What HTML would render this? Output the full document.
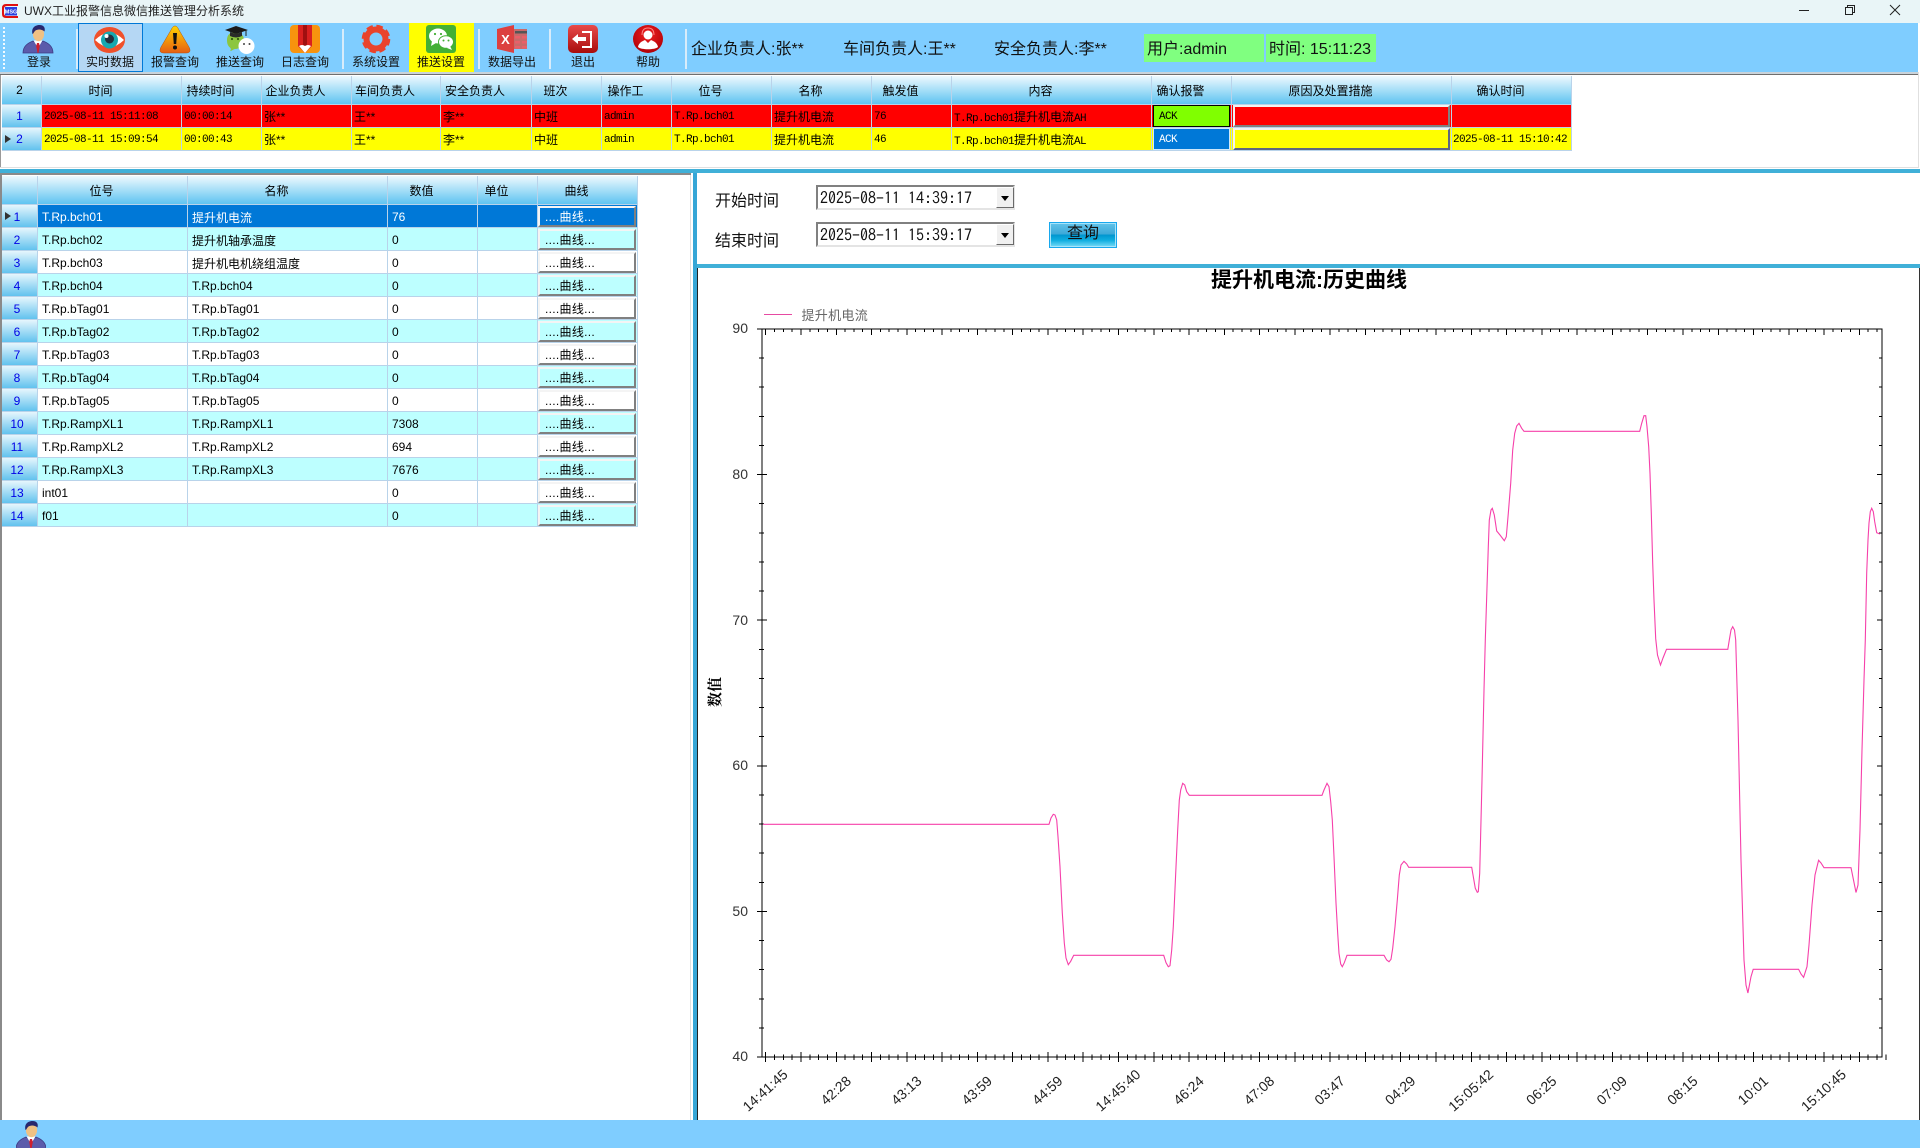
<!DOCTYPE html>
<html lang="zh-CN"><head><meta charset="utf-8"><title>UWX工业报警信息微信推送管理分析系统</title>
<style>
*{box-sizing:border-box}
html,body{margin:0;padding:0;width:1920px;height:1148px;overflow:hidden;background:#fff;font:12px "Liberation Sans","Noto Sans CJK SC",sans-serif;color:#000}
.a{position:absolute}
.tl{position:absolute;top:54px;width:70px;text-align:center;font-size:12px;line-height:16px;color:#111;white-space:nowrap}
.sep{position:absolute;top:29px;height:40px;width:2px;background:#d8ecfa}
.lb{position:absolute;top:39px;font-size:16px;line-height:22px;white-space:nowrap;color:#111}
table{position:absolute;border-collapse:separate;border-spacing:0;table-layout:fixed}
th{height:29px;padding:0 22px 0 0;font-weight:normal;font-size:12px;text-align:center;background:linear-gradient(#eef9fe,#5fc4f1);border-right:1px solid #b9d3ea;border-bottom:1px solid #b9d3ea;white-space:nowrap}
td{height:23px;padding:0;border-right:1px solid #b9d3ea;border-bottom:1px solid #b9d3ea;font-size:12px;white-space:nowrap;overflow:hidden;position:relative}
td.h{background:linear-gradient(#e6f6fd,#62c2ee);color:#0000e6;text-align:center}
#g1 td{padding-left:2px}
#g1 td.m{padding-top:2px}
#g1 td.h{padding:0 4px 0 0}
#g1 td.b{padding:0}
#g2 td{padding:2px 0 0 4px}
#g2 td.h{padding:1px 5px 0 0}
#g2 td.b{padding:0}
.m{font-family:"Liberation Mono","IPAGothic",monospace;font-size:11px;letter-spacing:-.6px}
.r{background:#f00}.y{background:#ff0}
.ar{position:absolute;left:3px;top:7px;width:0;height:0;border-left:6px solid #333;border-top:4.5px solid transparent;border-bottom:4.5px solid transparent}
.i3{height:22px;border:2px solid;border-color:#f2f2f2 #808080 #808080 #f2f2f2;margin:0 1px 0 1px}
.cy{background:#bdffff}
.sel{background:#0078d7;color:#fff}
.btn{height:21px;margin:0 1px 0 0;border:2px solid;border-color:#f4f4f4 #808080 #808080 #f4f4f4;padding-left:5px;line-height:18px;color:#000;letter-spacing:.3px}
.sel .btn,.btn.s{color:#fff;background:#0078d7}
.dp{position:absolute;left:816px;width:199px;height:25px;background:#fff;border:2px solid;border-color:#808080 #e4e4e4 #e4e4e4 #808080;font:16px/23px "IPAGothic","Liberation Mono",monospace;padding-left:2px;white-space:nowrap;color:#111}
.dd{position:absolute;right:-1px;top:0;width:18px;height:21px;background:#f0f0f0;border:1px solid;border-color:#fff #6a6a6a #6a6a6a #fff}
.dd:after{content:"";position:absolute;left:4px;top:8px;border-left:4px solid transparent;border-right:4px solid transparent;border-top:5px solid #000}
</style></head><body>

<!-- title bar -->
<div class="a" style="left:0;top:0;width:1920px;height:23px;background:#e9f5f7"></div>
<svg class="a" style="left:2px;top:3px" width="17" height="16" viewBox="0 0 17 16"><path d="M16 1H4Q0 1 0 5v6q0 4 4 4h12v-2H5q-3 0-3-3V6q0-3 3-3h11z" fill="#e01010"/><rect x="3" y="4" width="12" height="8.500" fill="#2a3fe0"/><text x="9" y="10.500" font-size="5.500" font-family="Liberation Sans" font-weight="bold" fill="#fff" text-anchor="middle">MSG</text></svg>
<div class="a" style="left:24px;top:3px;line-height:17px;font-size:12px;color:#222;white-space:nowrap">UWX工业报警信息微信推送管理分析系统</div>
<svg class="a" style="left:1790px;top:0" width="130" height="23" fill="none" stroke="#222" stroke-width="1" shape-rendering="crispEdges"><path d="M9 10.500h10"/><rect x="55.500" y="7.500" width="7" height="7" /><path d="M57.500 7.500V5.500h7v7h-2"/></svg>
<svg class="a" style="left:1889px;top:4px" width="12" height="12" fill="none" stroke="#222" stroke-width="1"><path d="M1 1l10 10M11 1L1 11"/></svg>

<!-- toolbar -->
<div class="a" style="left:0;top:23px;width:1918px;height:49px;background:#7fcdff"></div>
<div class="a" style="left:3px;top:27px;width:2px;height:44px;background:repeating-linear-gradient(#f4fbff 0 2px,transparent 2px 4px)"></div>
<div class="a" style="left:78px;top:23px;width:65px;height:49px;background:#b5d7f4;border:1px solid #0078d7"></div>
<div class="a" style="left:409px;top:23px;width:65px;height:49px;background:#ff0"></div>
<div class="sep" style="left:76px"></div><div class="sep" style="left:342px"></div><div class="sep" style="left:478px"></div><div class="sep" style="left:549px"></div><div class="sep" style="left:685px"></div>

<svg class="a" style="left:0;top:0" width="700" height="75">
<defs>
<symbol id="pp" viewBox="0 0 30 28" overflow="visible">
<path d="M0 28C0 21 5 18 10 16l5 3 5-3c5 2 10 5 10 12z" fill="#5b5bab" stroke="#3c3c85" stroke-width=".8"/>
<path d="M10.500 15.500L15 23l4.500-7.500z" fill="#fff"/>
<path d="M14 18h2l.8 3-1.300 7h-1l-1.300-7z" fill="#d01f2e"/>
<ellipse cx="15.500" cy="9" rx="5.600" ry="7.300" fill="#efc184"/>
<path d="M9.500 9C8 3 12 0 16.500 0S22.500 3 21.500 6.500C18 3.500 14 4.500 12.500 5.500 11 6.500 10.500 9 9.500 9z" fill="#27286e"/>
</symbol>
<linearGradient id="wg" x1="0" y1="0" x2="0" y2="1"><stop offset="0" stop-color="#ffd400"/><stop offset="1" stop-color="#e65f12"/></linearGradient>
<linearGradient id="eg" x1="0" y1="0" x2="0" y2="1"><stop offset="0" stop-color="#e84a4a"/><stop offset="1" stop-color="#a80c0c"/></linearGradient>
<radialGradient id="hg" cx=".5" cy=".35" r=".65"><stop offset="0" stop-color="#f02020"/><stop offset="1" stop-color="#b00008"/></radialGradient>
</defs>
<use href="#pp" x="23" y="25" width="30" height="28"/>
<!-- eye -->
<g transform="translate(94 27)"><ellipse cx="15.500" cy="13" rx="15.500" ry="13" fill="#f0502b"/><path d="M1 13Q15.500-1 30 13 15.500 27 1 13z" fill="#fff"/><circle cx="15.500" cy="13" r="8.500" fill="#18a8b0"/><circle cx="15.500" cy="12" r="4.500" fill="#243040"/><circle cx="12.500" cy="9" r="2" fill="#fff"/></g>
<!-- warning -->
<g transform="translate(160 26)"><path d="M15 0C13 0 12 2 11 4L1 21c-2 4-1 6 3 6h22c4 0 5-2 3-6L19 4c-1-2-2-4-4-4z" fill="url(#wg)" stroke="#b05010" stroke-width=".5"/><path d="M13 7h4l-.8 11h-2.400z" fill="#111"/><circle cx="15" cy="21.500" r="2" fill="#111"/></g>
<!-- graduate -->
<g transform="translate(225 26)"><path d="M2 14c0-5 3-8 8-8s9 3 9 8-4 9-9 9c-1.500 0-3 2-5 2 1-1 1-2 .5-3C3 20 2 18 2 14z" fill="#8cc63f"/><path d="M0 4L11 0l12 4-12 4z" fill="#1a1a1a"/><path d="M5 6v4q6 3 12 0V6l-6 2z" fill="#2a2a2a"/><path d="M21 4v6" stroke="#222"/><circle cx="21.500" cy="20" r="8" fill="#fff"/><circle cx="19" cy="18" r="1" fill="#444"/><circle cx="24.500" cy="18" r="1" fill="#444"/><circle cx="7" cy="13" r="1.100" fill="#335a10"/><circle cx="13" cy="13" r="1.100" fill="#335a10"/></g>
<!-- log -->
<g transform="translate(290 25)"><rect width="30" height="28" rx="4" fill="#f7930e"/><path d="M8 0h14v21l-7 7-7-7z" fill="#d9201f"/><path d="M13 0h4v22h-4z" fill="#a01010"/><path d="M9 21q3-2 6 0 3-2 6 0l-6 7z" fill="#fff"/></g>
<!-- gear -->
<g transform="translate(376 39)"><circle r="9.500" fill="none" stroke="#e9432c" stroke-width="6"/><circle r="12.500" fill="none" stroke="#e9432c" stroke-width="3.500" stroke-dasharray="6.300 3.520"/></g>
<!-- wechat -->
<g transform="translate(426 25)"><rect width="30" height="28" rx="3" fill="#44af35"/><ellipse cx="12" cy="11" rx="9" ry="7.500" fill="#fff"/><path d="M6 16l-1 5 5-3z" fill="#fff"/><ellipse cx="20" cy="17" rx="7.500" ry="6.300" fill="#fff" stroke="#44af35"/><path d="M24 21l2 4-5-2z" fill="#fff"/><circle cx="9" cy="9" r="1.100" fill="#44af35"/><circle cx="15" cy="9" r="1.100" fill="#44af35"/><circle cx="17.500" cy="15.500" r="1" fill="#44af35"/><circle cx="22.500" cy="15.500" r="1" fill="#44af35"/></g>
<!-- excel -->
<g transform="translate(497 25)"><path d="M0 4L17 0v28L0 24z" fill="#dc4040"/><path d="M17 4h13v20H17z" fill="#c86a6a"/><path d="M18 6h5v2.500h-5zM25 6h5v2.500h-5zM18 11h5v2.500h-5zM25 11h5v2.500h-5zM18 16h5v2.500h-5zM25 16h5v2.500h-5zM18 21h5v2.500h-5zM25 21h5v2.500h-5z" fill="#e8606a"/><path d="M18 6h12v2.500H18z" fill="#555"/><text x="8.500" y="19" font-size="13" font-weight="bold" font-family="Liberation Sans" fill="#fff" text-anchor="middle">X</text></g>
<!-- exit -->
<g transform="translate(568 25)"><rect width="30" height="28" rx="5" fill="url(#eg)"/><path d="M14 7h9v15h-9" fill="none" stroke="#fff" stroke-width="2"/><path d="M4 14l6-5v3h8v4h-8v3z" fill="#fff"/></g>
<!-- help -->
<g transform="translate(633 25)"><ellipse cx="15" cy="14" rx="15" ry="14" fill="url(#hg)"/><circle cx="15" cy="10" r="4.500" fill="#fff"/><path d="M5 22c1-5 5-6 7-7l3 3 3-3c2 1 6 2 7 7-3 3-17 3-20 0z" fill="#fff"/><path d="M9 10q0-7 6-7t6 7" fill="none" stroke="#f88" stroke-width="1"/></g>
</svg>

<div class="tl" style="left:4px">登录</div>
<div class="tl" style="left:75px">实时数据</div>
<div class="tl" style="left:140px">报警查询</div>
<div class="tl" style="left:205px">推送查询</div>
<div class="tl" style="left:270px">日志查询</div>
<div class="tl" style="left:341px">系统设置</div>
<div class="tl" style="left:406px">推送设置</div>
<div class="tl" style="left:477px">数据导出</div>
<div class="tl" style="left:548px">退出</div>
<div class="tl" style="left:613px">帮助</div>

<div class="lb" style="left:691px">企业负责人:张**</div>
<div class="lb" style="left:843px">车间负责人:王**</div>
<div class="lb" style="left:994px">安全负责人:李**</div>
<div class="a" style="left:1144px;top:34px;width:120px;height:28px;background:#80ff80"></div>
<div class="a" style="left:1266px;top:34px;width:110px;height:28px;background:#80ff80"></div>
<div class="lb" style="left:1147px">用户:admin</div>
<div class="lb" style="left:1269px">时间: 15:11:23</div>

<!-- upper grid panel -->
<div class="a" style="left:0;top:72px;width:1918px;height:2px;background:#c9d3da"></div>
<div class="a" style="left:0;top:74px;width:1918px;height:1px;background:#6e6e6e"></div>
<div class="a" style="left:0;top:75px;width:1px;height:93px;background:#9a9a9a"></div>
<div class="a" style="left:1918px;top:72px;width:1px;height:96px;background:#e0e0e0"></div>
<div class="a" style="left:0;top:167px;width:1919px;height:1px;background:#e0e0e0"></div>

<table id="g1" style="left:2px;top:76px;width:1570px">
<colgroup><col style="width:40px"><col style="width:140px"><col style="width:80px"><col style="width:90px"><col style="width:89px"><col style="width:91px"><col style="width:70px"><col style="width:70px"><col style="width:100px"><col style="width:100px"><col style="width:80px"><col style="width:200px"><col style="width:80px"><col style="width:220px"><col style="width:120px"></colgroup>
<tr><th style="padding:0 4px 0 0">2</th><th>时间</th><th>持续时间</th><th>企业负责人</th><th>车间负责人</th><th>安全负责人</th><th>班次</th><th>操作工</th><th>位号</th><th>名称</th><th>触发值</th><th>内容</th><th>确认报警</th><th>原因及处置措施</th><th>确认时间</th></tr>
<tr class="r"><td class="h">1</td><td class="m">2025-08-11 15:11:08</td><td class="m">00:00:14</td><td>张**</td><td>王**</td><td>李**</td><td>中班</td><td class="m">admin</td><td class="m">T.Rp.bch01</td><td>提升机电流</td><td class="m">76</td><td><span class="m">T.Rp.bch01</span>提升机电流<span class="m">AH</span></td><td class="b"><div class="m" style="height:22px;background:#80ff00;border:1px solid #000;padding-left:5px;line-height:22px;margin-right:1px;margin-left:1px">ACK</div></td><td class="b"><div class="i3"></div></td><td></td></tr>
<tr class="y"><td class="h"><i class="ar"></i>2</td><td class="m">2025-08-11 15:09:54</td><td class="m">00:00:43</td><td>张**</td><td>王**</td><td>李**</td><td>中班</td><td class="m">admin</td><td class="m">T.Rp.bch01</td><td>提升机电流</td><td class="m">46</td><td><span class="m">T.Rp.bch01</span>提升机电流<span class="m">AL</span></td><td class="b"><div class="m" style="height:22px;background:#0078d7;border:1px solid #cfe8fb;color:#fff;padding-left:5px;line-height:22px;margin-left:1px;margin-right:1px">ACK</div></td><td class="b"><div class="i3" style="border-color:#f2f2f2 #5e6880 #5e6880 #f2f2f2"></div></td><td class="m" style="padding-left:1px">2025-08-11 15:10:42</td></tr>
</table>

<!-- blue bars -->
<div class="a" style="left:0;top:169px;width:1920px;height:4px;background:#40b0d8"></div>
<div class="a" style="left:693px;top:173px;width:4px;height:947px;background:#36a6d6"></div>
<div class="a" style="left:697px;top:268px;width:1px;height:852px;background:#222"></div>
<div class="a" style="left:697px;top:264px;width:1223px;height:4px;background:#40b0d8"></div>
<div class="a" style="left:1919px;top:268px;width:1px;height:852px;background:#333"></div>

<!-- left panel borders -->
<div class="a" style="left:0;top:173px;width:691px;height:2px;background:#8a8a8a"></div>
<div class="a" style="left:0;top:173px;width:2px;height:947px;background:#8a8a8a"></div>
<div class="a" style="left:690px;top:175px;width:1px;height:945px;background:#e0e0e0"></div>

<table id="g2" style="left:2px;top:176px;width:636px">
<colgroup><col style="width:36px"><col style="width:150px"><col style="width:200px"><col style="width:90px"><col style="width:60px"><col style="width:100px"></colgroup>
<tr><th style="padding:0"></th><th>位号</th><th>名称</th><th>数值</th><th>单位</th><th>曲线</th></tr>
<tr class="sel"><td class="h"><i class="ar"></i>1</td><td>T.Rp.bch01</td><td>提升机电流</td><td>76</td><td></td><td class="b"><div class="btn s">....曲线...</div></td></tr>
<tr class="cy"><td class="h">2</td><td>T.Rp.bch02</td><td>提升机轴承温度</td><td>0</td><td></td><td class="b"><div class="btn">....曲线...</div></td></tr>
<tr><td class="h">3</td><td>T.Rp.bch03</td><td>提升机电机绕组温度</td><td>0</td><td></td><td class="b"><div class="btn">....曲线...</div></td></tr>
<tr class="cy"><td class="h">4</td><td>T.Rp.bch04</td><td>T.Rp.bch04</td><td>0</td><td></td><td class="b"><div class="btn">....曲线...</div></td></tr>
<tr><td class="h">5</td><td>T.Rp.bTag01</td><td>T.Rp.bTag01</td><td>0</td><td></td><td class="b"><div class="btn">....曲线...</div></td></tr>
<tr class="cy"><td class="h">6</td><td>T.Rp.bTag02</td><td>T.Rp.bTag02</td><td>0</td><td></td><td class="b"><div class="btn">....曲线...</div></td></tr>
<tr><td class="h">7</td><td>T.Rp.bTag03</td><td>T.Rp.bTag03</td><td>0</td><td></td><td class="b"><div class="btn">....曲线...</div></td></tr>
<tr class="cy"><td class="h">8</td><td>T.Rp.bTag04</td><td>T.Rp.bTag04</td><td>0</td><td></td><td class="b"><div class="btn">....曲线...</div></td></tr>
<tr><td class="h">9</td><td>T.Rp.bTag05</td><td>T.Rp.bTag05</td><td>0</td><td></td><td class="b"><div class="btn">....曲线...</div></td></tr>
<tr class="cy"><td class="h">10</td><td>T.Rp.RampXL1</td><td>T.Rp.RampXL1</td><td>7308</td><td></td><td class="b"><div class="btn">....曲线...</div></td></tr>
<tr><td class="h">11</td><td>T.Rp.RampXL2</td><td>T.Rp.RampXL2</td><td>694</td><td></td><td class="b"><div class="btn">....曲线...</div></td></tr>
<tr class="cy"><td class="h">12</td><td>T.Rp.RampXL3</td><td>T.Rp.RampXL3</td><td>7676</td><td></td><td class="b"><div class="btn">....曲线...</div></td></tr>
<tr><td class="h">13</td><td>int01</td><td></td><td>0</td><td></td><td class="b"><div class="btn">....曲线...</div></td></tr>
<tr class="cy"><td class="h">14</td><td>f01</td><td></td><td>0</td><td></td><td class="b"><div class="btn">....曲线...</div></td></tr>
</table>

<!-- query bar -->
<div class="a" style="left:715px;top:191px;font-size:16px;line-height:22px;color:#111">开始时间</div>
<div class="a" style="left:715px;top:231px;font-size:16px;line-height:22px;color:#111">结束时间</div>
<div class="dp" style="top:185px">2025-08-11 14:39:17<div class="dd"></div></div>
<div class="dp" style="top:222px">2025-08-11 15:39:17<div class="dd"></div></div>
<div class="a" style="left:1049px;top:222px;width:68px;height:26px;border:1px solid #18a8ee;box-shadow:inset 0 0 0 1px #a8e4fa;background:linear-gradient(#62c4ea 0,#3ca8d8 46%,#0096d0 50%,#10aee0 72%,#7adcf8 100%);text-align:center;font-size:16px;line-height:22px;color:#111">查询</div>

<!-- chart -->
<svg class="a" style="left:0;top:0" width="1920" height="1120" viewBox="0 0 1920 1120">
<defs>
<g id="bt" shape-rendering="crispEdges" stroke="#000" fill="none"><path d="M765.700 1052v10M774.520 1054.500v5.500M783.340 1054.500v5.500M792.160 1054.500v5.500"/></g>
<g id="bt2"><use href="#bt"/><use href="#bt" x="35.280"/></g>
<g id="bt4"><use href="#bt2"/><use href="#bt2" x="70.560"/></g>
<g id="bt8"><use href="#bt4"/><use href="#bt4" x="141.120"/></g>
<g id="bt32"><use href="#bt8"/><use href="#bt8" x="282.240"/><use href="#bt8" x="564.480"/><use href="#bt8" x="846.720"/></g>
<g id="tt" shape-rendering="crispEdges" stroke="#000" fill="none"><path d="M765.700 329v6M774.520 329v3M783.340 329v3M792.160 329v3"/></g>
<g id="tt2"><use href="#tt"/><use href="#tt" x="35.280"/></g>
<g id="tt4"><use href="#tt2"/><use href="#tt2" x="70.560"/></g>
<g id="tt8"><use href="#tt4"/><use href="#tt4" x="141.120"/></g>
<g id="tt32"><use href="#tt8"/><use href="#tt8" x="282.240"/><use href="#tt8" x="564.480"/><use href="#tt8" x="846.720"/></g>
</defs>
<g shape-rendering="crispEdges" stroke="#000" fill="none">
<path d="M757 329H1882V1057H757M762 329V1057"/>
<path d="M757 474.600h10M757 620.200h10M757 765.800h10M757 911.400h10"/>
<path d="M759 358.100h5M759 387.200h5M759 416.400h5M759 445.500h5M759 503.700h5M759 532.800h5M759 562h5M759 591.100h5M759 649.300h5M759 678.400h5M759 707.600h5M759 736.700h5M759 794.900h5M759 824h5M759 853.200h5M759 882.300h5M759 940.500h5M759 969.600h5M759 998.800h5M759 1027.900h5"/>
<path d="M1877 474.600h5M1877 620.200h5M1877 765.800h5M1877 911.400h5"/>
<path d="M1879 358.100h3M1879 387.200h3M1879 416.400h3M1879 445.500h3M1879 503.700h3M1879 532.800h3M1879 562h3M1879 591.100h3M1879 649.300h3M1879 678.400h3M1879 707.600h3M1879 736.700h3M1879 794.900h3M1879 824h3M1879 853.200h3M1879 882.300h3M1879 940.500h3M1879 969.600h3M1879 998.800h3M1879 1027.900h3"/>
</g>
<clipPath id="pc"><rect x="762" y="329" width="1120" height="728"/></clipPath>
<g clip-path="url(#pc)"><use href="#tt32"/></g>
<g><use href="#bt32"/></g>

<polyline fill="none" stroke="#f640aa" stroke-width="1.100" points="763,824.300 1049,824.300 1051,818 1053.300,814.300 1055,815 1056.700,820 1058,836.700 1060,866.700 1062.300,913 1064.300,943 1066,958 1068.300,964.700 1070.700,961.300 1073.700,955.300 1163.700,955.300 1166,962.700 1168.300,966.700 1170,965.700 1171.700,950 1173.300,926.700 1175.700,873.300 1177.700,830 1179.300,800 1180.700,790 1182.700,783.300 1184.700,785 1186.700,791.700 1189.300,795.300 1322,795.300 1324,790 1327,783.300 1329,786.700 1330.700,801.700 1332.300,820 1334,856.700 1336,903 1337.700,933.300 1339,953.300 1340.700,964 1342.300,966.700 1344.300,962.700 1347,955.300 1384,955.300 1386.700,960 1389,961.700 1391,959.300 1392.700,948.300 1395,926.700 1397.300,900 1399.300,875 1401,865 1404,861.300 1406.700,864 1408.700,867.300 1471.700,867.300 1473.300,876.700 1475.300,888.300 1477.300,892.300 1478.300,891.700 1479.700,873.300 1482,780 1484,690 1485.300,640 1486.700,596.700 1488.300,546.700 1489.300,520 1491,510 1492.300,508.300 1494.300,515 1496.700,531 1500,535 1504.300,540.700 1506.300,536.700 1508.300,513.300 1510.700,483.300 1512.700,450 1514.700,433.300 1516.700,426 1519,423.300 1521.700,428.300 1524,431.300 1639.700,431.300 1641.700,423.300 1644,415.700 1645.700,415.700 1647,426.700 1648.700,446.700 1650,473.300 1651.300,513.300 1652.700,563.300 1654,600 1655.700,638.700 1657.500,655 1660.500,665 1663,658 1666.500,649.300 1727.800,649.300 1729.300,640 1731,630 1732.700,626.700 1734.500,630 1735.700,640 1738,720 1741,860 1744,960 1746,985 1747.900,993 1751,976.700 1753.200,969.300 1798.600,969.300 1801,974 1803.600,977.300 1807,966.700 1809,945 1812,905 1815,875 1818.600,860.300 1821,863 1824,867.700 1851,867.700 1853.500,880 1856,892.500 1858,885 1860,830 1862,750 1864,680 1865.300,640 1866.700,573 1868,540 1869,523 1870.300,511.700 1871.700,508.300 1873.300,511.700 1874.700,521.700 1876.700,532.700 1880,534"/>

<g font-family="Liberation Sans" font-size="14" fill="#333" text-anchor="end">
<text x="748" y="333">90</text><text x="748" y="479">80</text><text x="748" y="625">70</text><text x="748" y="770">60</text><text x="748" y="916">50</text><text x="748" y="1061">40</text>
</g>
<g font-family="Liberation Sans" font-size="14" fill="#222" text-anchor="middle">
<text transform="translate(765.700 1091) rotate(-42)" y="4">14:41:45</text>
<text transform="translate(836.300 1091) rotate(-42)" y="4">42:28</text>
<text transform="translate(906.800 1091) rotate(-42)" y="4">43:13</text>
<text transform="translate(977.400 1091) rotate(-42)" y="4">43:59</text>
<text transform="translate(1047.900 1091) rotate(-42)" y="4">44:59</text>
<text transform="translate(1118.500 1091) rotate(-42)" y="4">14:45:40</text>
<text transform="translate(1189.100 1091) rotate(-42)" y="4">46:24</text>
<text transform="translate(1259.600 1091) rotate(-42)" y="4">47:08</text>
<text transform="translate(1330.200 1091) rotate(-42)" y="4">03:47</text>
<text transform="translate(1400.700 1091) rotate(-42)" y="4">04:29</text>
<text transform="translate(1471.300 1091) rotate(-42)" y="4">15:05:42</text>
<text transform="translate(1541.900 1091) rotate(-42)" y="4">06:25</text>
<text transform="translate(1612.400 1091) rotate(-42)" y="4">07:09</text>
<text transform="translate(1683 1091) rotate(-42)" y="4">08:15</text>
<text transform="translate(1753.500 1091) rotate(-42)" y="4">10:01</text>
<text transform="translate(1824.100 1091) rotate(-42)" y="4">15:10:45</text>
</g>
<path d="M764 314.500h28" stroke="#e64aa2" stroke-width="1" shape-rendering="crispEdges"/>
<text x="801.500" y="320" font-size="13" letter-spacing=".3" fill="#666" font-family="Liberation Sans,Noto Sans CJK SC,sans-serif">提升机电流</text>
<text x="1211" y="287" font-size="21" font-weight="bold" fill="#000" font-family="Liberation Sans,Noto Sans CJK SC,sans-serif">提升机电流:历史曲线</text>
<text transform="translate(720 692) rotate(-90)" text-anchor="middle" font-size="15" font-weight="bold" fill="#000" font-family="Liberation Sans,Noto Serif CJK SC,serif">数值</text>
</svg>

<!-- status bar -->
<div class="a" style="left:0;top:1120px;width:1920px;height:28px;background:#7fcdff;overflow:hidden">
<svg class="a" style="left:16px;top:1px" width="30" height="28" viewBox="0 0 30 28">
<path d="M0 28C0 21 5 18 10 16l5 3 5-3c5 2 10 5 10 12z" fill="#5b5bab" stroke="#3c3c85" stroke-width=".8"/>
<path d="M10.500 15.500L15 23l4.500-7.500z" fill="#fff"/>
<path d="M14 18h2l.8 3-1.300 7h-1l-1.300-7z" fill="#d01f2e"/>
<ellipse cx="15.500" cy="9" rx="5.600" ry="7.300" fill="#efc184"/>
<path d="M9.500 9C8 3 12 0 16.500 0S22.500 3 21.500 6.500C18 3.500 14 4.500 12.500 5.500 11 6.500 10.500 9 9.500 9z" fill="#27286e"/>
</svg></div>
</body></html>
